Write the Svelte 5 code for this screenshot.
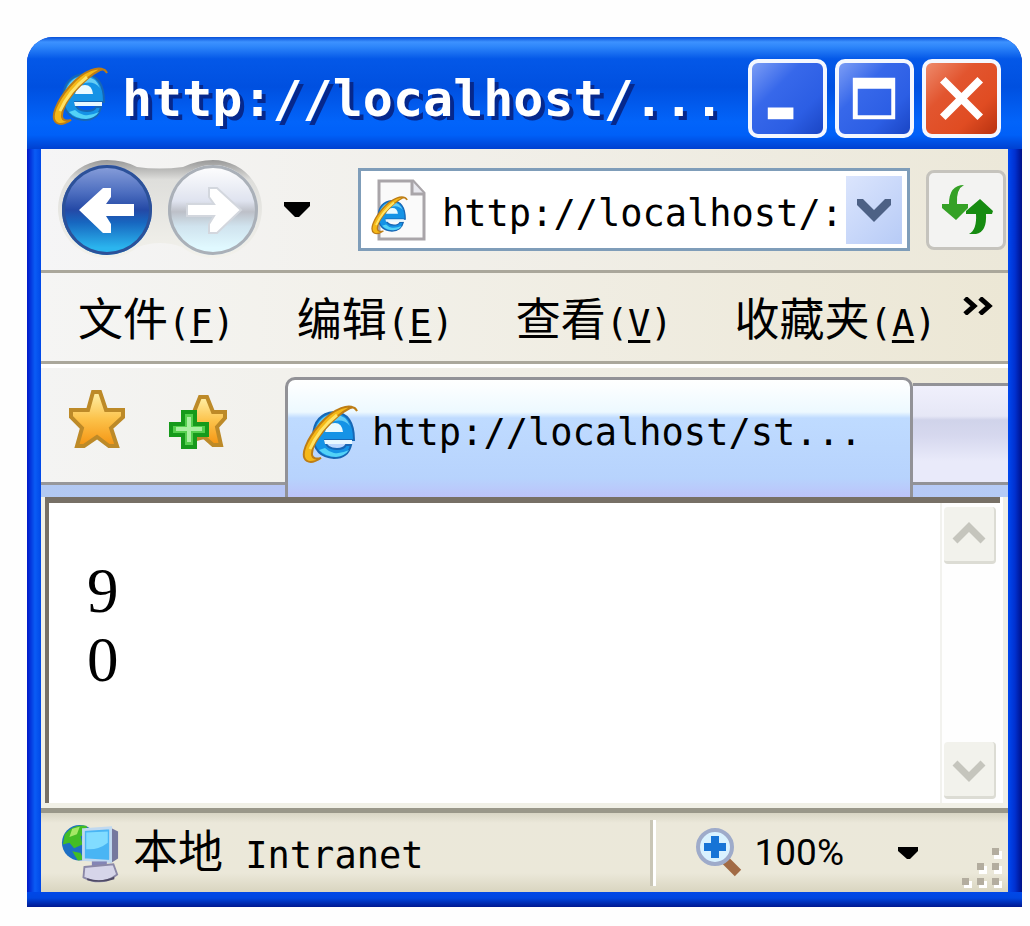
<script>
  let address = 'http://localhost/:';

  const menus = [
    { name: '文件', key: 'F' },
    { name: '编辑', key: 'E' },
    { name: '查看', key: 'V' },
    { name: '收藏夹', key: 'A' }
  ];

  const output = ['9', '0'];
</script>

<!-- shared Internet Explorer "e" -->
{#snippet ieLogo()}
  <path d="M50 38H23q1 9 12 9 7 0 9-4h5Q46 56 32 56 12 55 11 34 12 12 32 10q20 1 20 28z" fill="#1593e6" stroke="#1767b5" stroke-width="2" />
  <path d="M13 29Q17 13 32 12q12 1 16 12-6-7-15-5-12 1-20 10z" fill="#65cdf5" />
  <path d="M23 30q2-9 10-9 7 0 8 9z" fill="#eafaff" />
  <path d="M22 38h28v4H23z" fill="#e8f8ff" />
  <path d="M17 48q7 7 17 7 9-1 13-7-8 4-15 3-5-1-9-5z" fill="#53d2f7" />
  <path d="M55 9C49-1 31 7 18 22 5 37-3 54 5 59q5 3 14-3-8 2-9-3-1-9 12-25Q36 12 48 6q5-2 7 3z" fill="#f5b817" stroke="#bd7d16" stroke-width="2" />
  <path d="M8 47Q17 27 35 13" fill="none" stroke="#ffe365" stroke-width="3" />
{/snippet}

<div class="window">
  <header class="titlebar">
    <svg class="icon" viewBox="0 0 58 62" aria-hidden="true">{@render ieLogo()}</svg>
    <h1>http://localhost/...</h1>
    <div class="controls">
      <button aria-label="最小化">
        <svg viewBox="0 0 72 72"><path d="M16 45h26v12H16z" fill="#fff" /></svg>
      </button>
      <button aria-label="最大化">
        <svg viewBox="0 0 72 72"><path d="M14 15h43v42H14zM19 26v27h34V26z" fill="#fff" fill-rule="evenodd" /></svg>
      </button>
      <button class="close" aria-label="关闭">
        <svg viewBox="0 0 72 72"><path d="M17 17l38 38M55 17L17 55" stroke="#fff" stroke-width="8" /></svg>
      </button>
    </div>
  </header>

  <div class="toolbar">
    <div class="nav">
      <svg class="nav-bg" viewBox="0 0 206 100" aria-hidden="true">
        <defs>
          <linearGradient id="rim" x2="0" y2="1">
            <stop offset="0" stop-color="#989898" />
            <stop offset=".2" stop-color="#dededb" />
            <stop offset="1" stop-color="#f3f2ec" />
          </linearGradient>
        </defs>
        <path d="M50 1q17 0 30 7 22 3 46 0 15-7 30-7a49 49 0 1 1-31 87q-22-8-44 0A49 49 0 1 1 50 1z" fill="url(#rim)" />
      </svg>
      <button class="back" aria-label="后退">
        <svg viewBox="0 0 90 90">
          <path d="M17 45L41 23h8v9l-5 7h28v12H44l5 8v9h-8z" fill="#fff" />
        </svg>
      </button>
      <button class="forward" aria-label="前进">
        <svg viewBox="0 0 90 90">
          <path d="M73 45L49 23h-8v9l5 7H19v12h27l-5 8v9h8z" fill="#fff" stroke="#d3d7de" stroke-width="2" />
        </svg>
      </button>
    </div>
    <button class="recent" aria-label="历史">
      <svg viewBox="0 0 26 15"><path d="M0 0h26v4L15 15h-4L0 4z" /></svg>
    </button>
    <div class="address">
      <svg class="icon" viewBox="0 0 58 62" aria-hidden="true">
        <path d="M10 2h34l11 12v46H10z" fill="#fafafa" stroke="#a9a5a9" stroke-width="3" />
        <path d="M43 2v13h12" fill="#e8e8ee" stroke="#a9a5a9" stroke-width="3" />
        <svg y="15" width="42" height="41" viewBox="0 0 58 62">{@render ieLogo()}</svg>
      </svg>
      <input type="text" aria-label="地址" bind:value={address} />
      <button class="drop" aria-label="显示地址">
        <svg viewBox="0 0 56 68"><path d="M11 23h6l11 11 11-11h6v6L28 46 11 29z" fill="#4d6185" /></svg>
      </button>
    </div>
    <button class="refresh" aria-label="刷新">
      <svg viewBox="0 0 74 74">
        <path d="M13 31h7q0-19 15-19-8 4-7 19h11v4L27 47 13 35z" fill="#35a126" />
        <path d="M63 41h-6q1 18-10 20h-7q8-4 7-20H37v-3l14-12 13 12z" fill="#168b11" />
      </svg>
    </button>
  </div>

  <nav class="menubar">
    <div class="menus">
      {#each menus as menu}
        <button><span class="han">{menu.name}</span>(<u>{menu.key}</u>)</button>
      {/each}
    </div>
    <button class="more" aria-label="更多">
      <svg viewBox="0 0 30 18"><path d="M2 1l9 8-9 8M17 1l9 8-9 8" fill="none" stroke="#000" stroke-width="5" /></svg>
    </button>
  </nav>

  <div class="tabrow">
    <div class="favorites">
      <button aria-label="收藏中心">
        <svg viewBox="0 0 58 60">
          <defs>
            <linearGradient id="gold" x2="0" y2="1">
              <stop offset="0" stop-color="#fff0a8" />
              <stop offset=".5" stop-color="#fcc24a" />
              <stop offset="1" stop-color="#f49412" />
            </linearGradient>
          </defs>
          <path d="M25 3h7l6 18h17v7L43 39l6 18h-8L29 48 16 57H9l5-18L3 28v-7h17z" fill="url(#gold)" stroke="#bd8a28" stroke-width="4" />
        </svg>
      </button>
      <button aria-label="添加到收藏夹">
        <svg viewBox="0 0 58 60">
          <path d="M31 8h7l6 15h12v6l-8 9 4 18h-8l-9-8-15 4V23h5z" fill="url(#gold)" stroke="#bd8a28" stroke-width="4" />
          <path d="M14 23h12v12h12v11H26v12H14V46H2V35h12z" fill="#54cf4d" stroke="#169a1b" stroke-width="4" />
          <path d="M20 28v25M7 40h26" stroke="#a9efa0" stroke-width="4" />
        </svg>
      </button>
    </div>
    <button class="tab">
      <svg class="icon" viewBox="0 0 58 62" aria-hidden="true">{@render ieLogo()}</svg>
      <span>http://localhost/st...</span>
    </button>
    <button class="newtab" aria-label="新选项卡"></button>
  </div>

  <main class="view">
    <div class="page">
      {#each output as line}
        <p>{line}</p>
      {/each}
    </div>
    <div class="scrollbar">
      <button aria-label="向上滚动">
        <svg viewBox="0 0 50 54"><path d="M11 34l14-14 14 14" fill="none" stroke="#c5c5bd" stroke-width="7" /></svg>
      </button>
      <button aria-label="向下滚动">
        <svg viewBox="0 0 50 54"><path d="M11 21l14 14 14-14" fill="none" stroke="#c5c5bd" stroke-width="7" /></svg>
      </button>
    </div>
  </main>

  <footer class="status">
    <div class="zone">
      <svg class="icon" viewBox="0 0 62 64" aria-hidden="true">
        <circle cx="20" cy="21" r="19" fill="#1d6fc4" />
        <path d="M4 12Q13 1 27 3l3 8-9 3 2 9-9 4-5-6-7 2zM12 30l9 2 3 7-6 1z" fill="#43bd25" />
        <path d="M12 6l8-2-3 8-8 3z" fill="#a5e765" />
        <path d="M53 5l8 4v29l-8 5z" fill="#76789e" />
        <path d="M24 7l29-2v36l-29-2z" fill="#49b5f4" stroke="#c0d9f0" stroke-width="3" />
        <path d="M27 10l23-1v12q-10 8-23 7z" fill="#81dcff" />
        <path d="M33 41h16v7H33z" fill="#8485b5" />
        <path d="M25 47l31-3 4 11q-16 13-36 3z" fill="#d6d5e9" stroke="#8b88a7" stroke-width="2" />
        <path d="M28 59q15 5 29-2v3q-14 5-29 1z" fill="#4f4a65" />
      </svg>
      <span><span class="han">本地</span> Intranet</span>
    </div>
    <button class="zoom">
      <svg class="lens" viewBox="0 0 48 50" aria-hidden="true">
        <path d="M31 33l12 12" stroke="#a26b45" stroke-width="9" />
        <circle cx="20" cy="19" r="17" fill="#d9f2ff" stroke="#9eabca" stroke-width="4" />
        <path d="M16 8h8v7h7v8h-7v7h-8v-7H9v-8h7z" fill="#1774d6" />
      </svg>
      <span>100%</span>
      <svg class="arrow" viewBox="0 0 20 12" aria-hidden="true"><path d="M0 0h20v4l-8 8H9L0 4z" /></svg>
    </button>
    <svg class="grip" viewBox="0 0 40 40" aria-hidden="true">
      <path d="M32 3h8v8h-8zM17 18h8v8h-8zM32 18h8v8h-8zM2 33h8v7H2zM17 33h8v7h-8zM32 33h8v7h-8z" fill="#fff" />
      <path d="M30 0h7v7h-7zM15 15h7v7h-7zM30 15h7v7h-7zM0 30h7v7H0zM15 30h7v7h-7zM30 30h7v7h-7z" fill="#b3ad9f" />
    </svg>
  </footer>
</div>

<style>
  :global(body) {
    background: #fefefe;
  }

  .window {
    margin: 37px 8px 0 27px;
    padding: 0 14px 15px;
    border-radius: 26px 26px 0 0;
    background:
      linear-gradient(#0048e8, #0046e0 40%, #001890) bottom / 100% 15px no-repeat,
      linear-gradient(90deg, #0018c8, #0a5cf5 8px, #0048e8 14px) left / 14px 100% no-repeat,
      linear-gradient(90deg, #0048f0, #0030d0 7px, #001088 14px) right / 14px 100% no-repeat,
      #0050e8;
    font-family: 'DejaVu Sans Mono', 'Noto Sans CJK SC', monospace;
    font-size: 37px;
    line-height: 48px;
    color: #000;
    overflow: hidden;
  }

  button {
    padding: 0;
    border: 0;
    background: none;
    font: inherit;
    color: inherit;
    flex: none;
  }

  svg {
    display: block;
  }

  .icon {
    width: 58px;
    height: 62px;
    flex: none;
  }

  .han {
    font-family: 'Noto Sans CJK SC', sans-serif;
    font-size: 45px;
  }

  /* Title bar */
  .titlebar {
    display: flex;
    align-items: center;
    height: 112px;
    margin: 0 -14px;
    padding: 4px 21px 0 25px;
    box-sizing: border-box;
    background: linear-gradient(#0850d8, #3d92ff 5px, #2d85fa 10px, #0458e8 22px, #0050e0 50px, #0264fa 85px, #0060f8 98px, #0040d0);
  }

  h1 {
    flex: 1;
    min-width: 0;
    margin: 0 0 0 12px;
    padding-top: 8px;
    font-size: 50px;
    line-height: 60px;
    color: #fff;
    text-shadow: 4px 4px 0 #06288c;
    white-space: nowrap;
    overflow: hidden;
  }

  .controls {
    display: flex;
    gap: 8px;
    padding-top: 6px;
  }

  .controls button {
    width: 79px;
    height: 79px;
    border: 4px solid #f4f7ff;
    border-radius: 10px;
    background: linear-gradient(135deg, #7c9df5, #3768ea 35%, #2c5ee4 70%, #1a45c4);
  }

  .controls .close {
    background: linear-gradient(135deg, #ee8a6c, #e2552f 35%, #e04c22 70%, #b83210);
  }

  /* Toolbar */
  .toolbar {
    display: flex;
    align-items: center;
    height: 121px;
    padding-right: 2px;
    border-bottom: 3px solid #aaa79b;
    background: linear-gradient(90deg, #f5f5f6, #ece8d9);
  }

  .nav {
    position: relative;
    display: flex;
    gap: 16px;
    margin-left: 21px;
  }

  .nav-bg {
    position: absolute;
    top: -6px;
    left: -5px;
    width: 206px;
    height: 100px;
  }

  .nav button {
    position: relative;
    width: 90px;
    height: 90px;
    border-radius: 50%;
  }

  .back {
    background: linear-gradient(#8ba1dc, #4e6fc0 30%, #2449a6 50%, #1767c0 64%, #2bb5ee 92%);
    box-shadow: inset 0 0 0 3px #2c5199;
  }

  .forward {
    background: linear-gradient(#fff, #dfe3ef 40%, #bdc0c8 52%, #d0e3ee 68%, #e0f9ff 92%);
    box-shadow: inset 0 0 0 3px #aab0b8;
  }

  .recent {
    margin: 0 48px 0 26px;
  }

  .recent svg {
    width: 26px;
    height: 15px;
  }

  .address {
    flex: 1;
    min-width: 0;
    display: flex;
    align-items: center;
    height: 83px;
    padding: 0 5px 0 8px;
    box-sizing: border-box;
    border: 3px solid #7f9db9;
    background: #fff;
  }

  input {
    flex: 1;
    min-width: 0;
    height: 56px;
    margin-left: 15px;
    padding: 8px 0 0;
    box-sizing: border-box;
    border: 0;
    outline: 0;
    background: none;
    font: inherit;
    color: inherit;
  }

  .drop {
    width: 56px;
    height: 68px;
    background: linear-gradient(135deg, #dbe5fd, #b7cbf6);
  }

  .refresh {
    width: 80px;
    height: 80px;
    margin-left: 16px;
    border: 3px solid #c5c3bd;
    border-radius: 8px;
    background: #f3f3f2;
  }

  /* Menu bar */
  .menubar {
    display: flex;
    height: 88px;
    border-bottom: 3px solid #aaa79b;
    background: linear-gradient(90deg, #f5f5f4, #ece7d5);
  }

  .menus {
    flex: 1;
    min-width: 0;
    display: flex;
    align-items: center;
    gap: 62px;
    padding: 6px 0 0 37px;
    overflow: hidden;
    white-space: nowrap;
  }

  u {
    text-decoration-thickness: 3px;
    text-underline-offset: 4px;
  }

  .more {
    align-self: flex-start;
    margin: 24px 15px 0 26px;
  }

  .more svg {
    width: 30px;
    height: 18px;
  }

  /* Tabs */
  .tabrow {
    display: flex;
    align-items: stretch;
    height: 133px;
    padding-top: 9px;
    box-sizing: border-box;
    border-top: 4px solid #fff;
    background:
      linear-gradient(90deg, #b2c9f2, #bcc3fa 50%, #b5cbf5) bottom / 100% 12px no-repeat,
      linear-gradient(90deg, #f4f4f3, #ece8d8);
  }

  .favorites {
    display: flex;
    align-items: center;
    gap: 43px;
    width: 244px;
    margin-bottom: 12px;
    padding: 0 0 22px 27px;
    box-sizing: border-box;
    border-bottom: 3px solid #97979a;
  }

  .favorites svg {
    width: 58px;
    height: 60px;
  }

  .tab {
    flex: 1;
    min-width: 0;
    display: flex;
    align-items: center;
    gap: 12px;
    padding: 0 0 12px 14px;
    border: 3px solid #929297;
    border-bottom: 0;
    border-radius: 10px 10px 0 0;
    background: linear-gradient(#fff, #edf9ff 32px, #bfdbff 38px, #b7d3fd 98px, #bcc3fa);
    white-space: nowrap;
    overflow: hidden;
  }

  .newtab {
    width: 95px;
    margin: 6px 0 12px;
    border: solid #929297;
    border-width: 3px 0;
    background: linear-gradient(#f0f0fc, #e6e7f6 30px, #d0d3ea 34px, #d6d8ee 50px, #e9eafa 75px);
  }

  /* Page */
  .view {
    display: flex;
    padding-right: 3px;
    border: solid #f1f0e6;
    border-width: 0 5px 5px 4px;
    background: #fff;
  }

  .page {
    flex: 1;
    min-height: 306px;
    padding: 54px 0 0 38px;
    box-sizing: border-box;
    border-top: 6px solid #777066;
    border-left: 4px solid #777066;
    font-family: 'Liberation Serif', serif;
    font-size: 63px;
    line-height: 69px;
  }

  p {
    margin: 0;
  }

  .scrollbar {
    display: flex;
    flex-direction: column;
    justify-content: space-between;
    padding: 4px 4px 4px 4px;
    border-top: 6px solid #777066;
    background: linear-gradient(90deg, #f2f2ee 2px, #fefefe 2px);
  }

  .scrollbar button {
    border: solid #dcdcd4;
    border-width: 0 2px 3px 0;
    border-radius: 4px;
    background: #f2f2ec;
  }

  .scrollbar svg {
    width: 50px;
    height: 54px;
  }

  /* Status bar */
  .status {
    display: flex;
    align-items: center;
    height: 79px;
    padding: 0 6px 0 20px;
    border-top: 5px solid #999789;
    background: linear-gradient(#d8d5c4, #ebe8da 10px, #ebe8d9 60px, #d9d5c0);
  }

  .zone {
    flex: 1;
    min-width: 0;
    display: flex;
    align-items: center;
    gap: 14px;
    white-space: nowrap;
  }

  .zoom {
    display: flex;
    align-items: center;
    height: 66px;
    padding-left: 42px;
    border-left: 3px solid #c9c6b6;
    box-shadow: inset 3px 0 0 #fff;
    font-family: Roboto, sans-serif;
  }

  .lens {
    width: 48px;
    height: 50px;
    margin-right: 12px;
  }

  .arrow {
    width: 20px;
    height: 12px;
    margin-left: 54px;
  }

  .grip {
    align-self: flex-end;
    width: 40px;
    height: 40px;
    margin: 0 0 4px 44px;
  }
</style>
